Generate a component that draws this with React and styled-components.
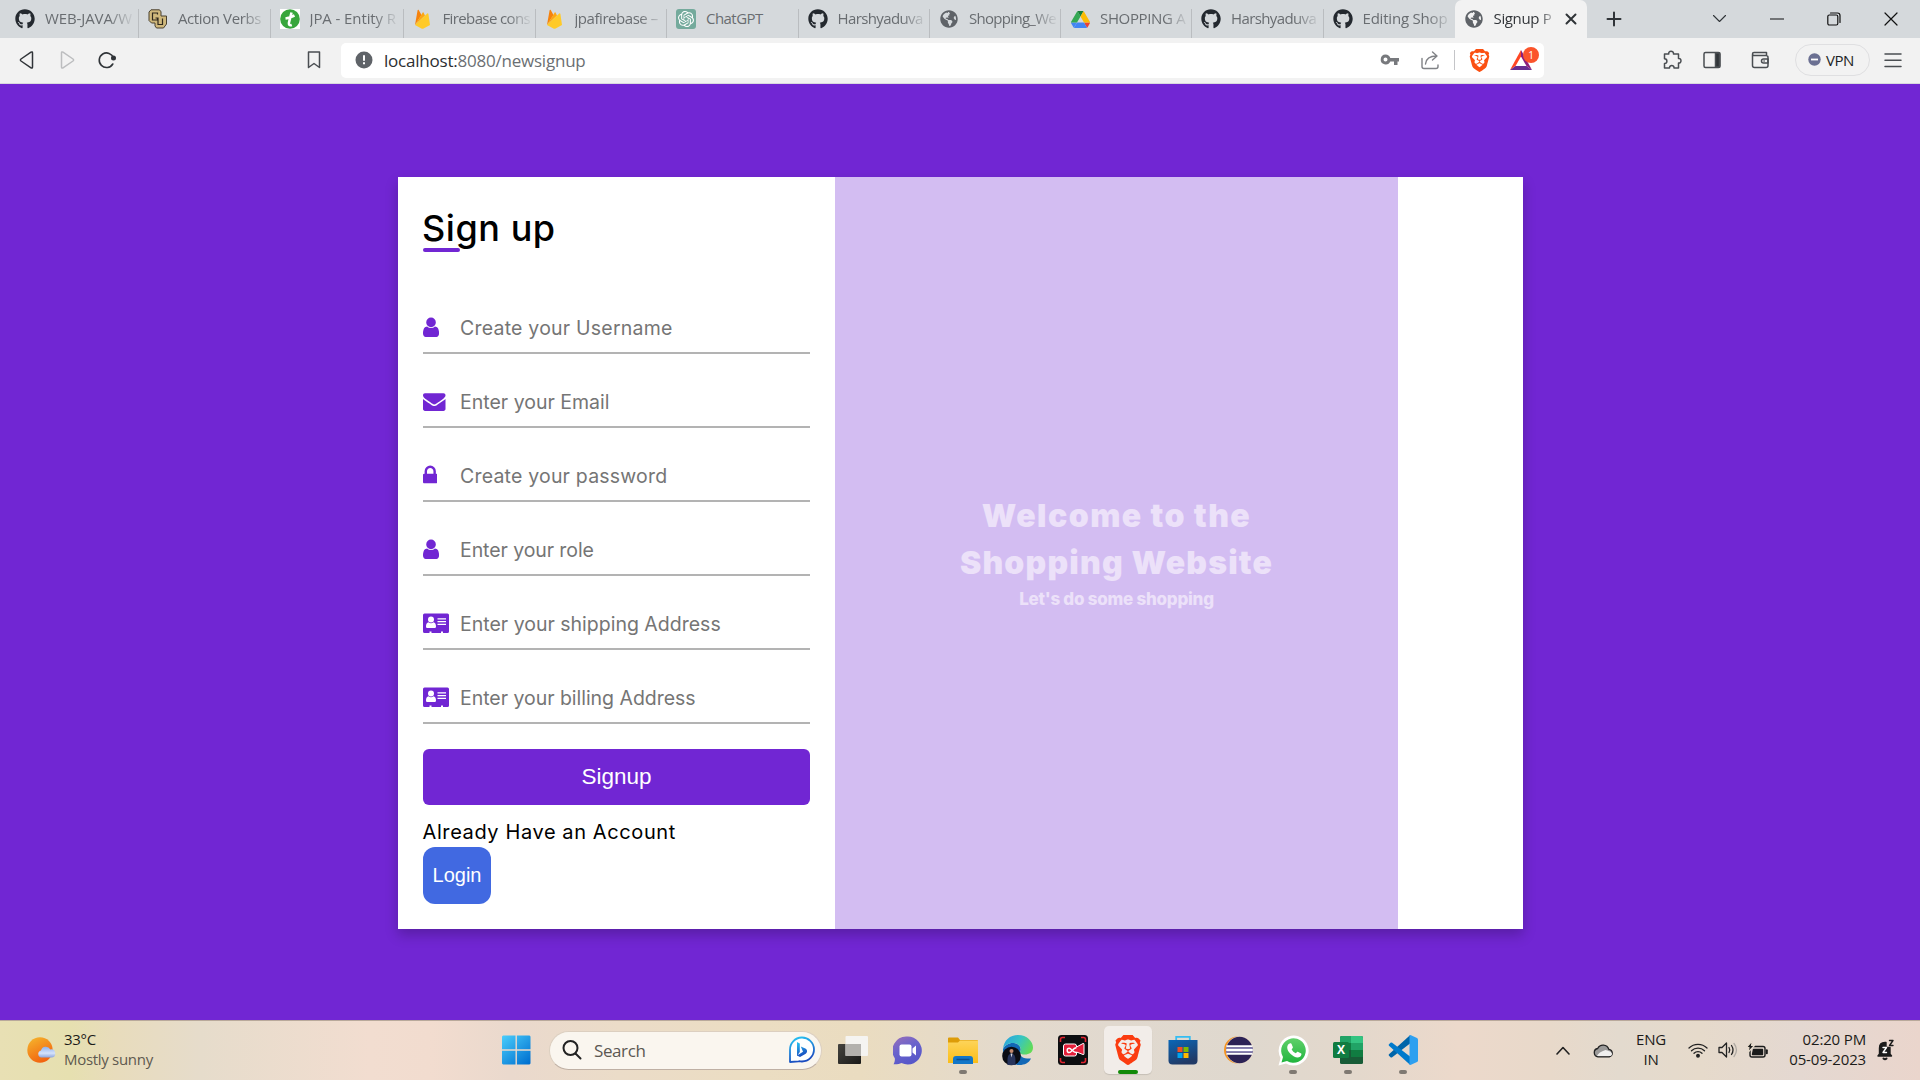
import React from "react";
import styled, { createGlobalStyle, css } from "styled-components";
import { FaGithub, FaGlobeAmericas } from "react-icons/fa";
import { SiBrave, SiOpenai } from "react-icons/si";

const PURPLE = "#7126d3";
const UI = '"Open Sans", "Noto Sans", sans-serif';

const GlobalStyle = createGlobalStyle`
  *, *::before, *::after { box-sizing: border-box; }
  body { margin: 0; background: ${PURPLE}; overflow: hidden; }
  svg { display: block; flex: none; }
`;

const Screen = styled.div`
  width: 1920px;
  height: 1080px;
  display: flex;
  flex-direction: column;
  overflow: hidden;
  font-family: ${UI};
`;

/* ---------- tab strip ---------- */

const TabStrip = styled.div`
  height: 38px;
  flex: none;
  display: flex;
  background: #d5d9dc;
  padding-left: 7px;
`;

const Tab = styled.div`
  position: relative;
  width: ${(p) => p.$w || 131.5}px;
  flex: none;
  height: 38px;
  display: flex;
  align-items: center;
  padding-left: ${(p) => (p.$first ? 8 : 9)}px;
  background: ${(p) => (p.$active ? "#f2f2f2" : "transparent")};
  border-radius: ${(p) => (p.$active ? "7px 7px 0 0" : "0")};
  ${(p) =>
    p.$line &&
    css`
      &::after {
        content: "";
        position: absolute;
        right: 0;
        top: 9px;
        width: 1px;
        height: 29px;
        background: #babdc0;
      }
    `}
`;

const TabIcon = styled.span`
  width: 20px;
  height: 20px;
  flex: none;
  display: flex;
  align-items: center;
  justify-content: center;
`;

const TabLabel = styled.span`
  width: ${(p) => p.$w || 89}px;
  margin: -2px 0 0 10px;
  white-space: nowrap;
  font-size: 15px;
  line-height: 22px;
  letter-spacing: ${(p) => p.$ls}px;
  font-weight: ${(p) => (p.$active ? 500 : 400)};
  color: ${(p) => (p.$active ? "#34373b" : "#696d71")};
  mask-image: ${(p) => (p.$whole ? "none" : "linear-gradient(90deg, #000 72%, rgba(0, 0, 0, 0.1) 98%)")};
`;

const StripGlyph = styled.span`
  width: ${(p) => p.$w}px;
  margin-left: ${(p) => p.$ml || 0}px;
  height: 38px;
  display: flex;
  align-items: center;
  justify-content: center;
`;

/* ---------- toolbar ---------- */

const Toolbar = styled.div`
  height: 46px;
  flex: none;
  display: flex;
  align-items: center;
  background: #f2f2f2;
  border-bottom: 1px solid #d9d8de;
  padding: 0 0 1px 15px;
`;

const ToolIcon = styled.span`
  width: 24px;
  height: 24px;
  flex: none;
  margin-left: ${(p) => p.$ml || 0}px;
  display: flex;
  align-items: center;
  justify-content: center;
`;

const AddressBar = styled.div`
  width: 1203px;
  height: 35px;
  flex: none;
  margin-left: 15px;
  display: flex;
  align-items: center;
  background: #fff;
  border-radius: 5px;
  padding-left: 11px;
`;

const Url = styled.span`
  flex: 1;
  margin-left: 8px;
  font-size: 17px;
  letter-spacing: -0.22px;
  color: #6b6f73;
  b { font-weight: 400; color: #2b2e31; }
`;

const Divider = styled.span`
  width: 1px;
  height: 20px;
  margin: 0 12px;
  background: #c4c5c8;
`;

const Rewards = styled.span`
  position: relative;
  width: 30px;
  height: 24px;
  margin: 0 5px 0 18px;
  flex: none;
`;

const Badge = styled.span`
  position: absolute;
  left: 14px;
  top: -1px;
  width: 16px;
  height: 16px;
  border-radius: 50%;
  background: #fb542b;
  color: #fff;
  font-size: 10px;
  line-height: 16px;
  text-align: center;
`;

const Vpn = styled.span`
  width: 75px;
  height: 32px;
  margin-left: 23px;
  display: flex;
  align-items: center;
  gap: 5px;
  padding: 0 0 1px 12px;
  border: 1px solid #dfdfe1;
  border-radius: 16px;
  font-size: 15px;
  line-height: 22px;
  letter-spacing: -0.45px;
  color: #1d1f25;
`;

/* ---------- page ---------- */

const Page = styled.main`
  flex: 1;
  background: ${PURPLE};
  padding: 93px 0 0 398px;
`;

const Card = styled.section`
  width: 1125px;
  height: 752px;
  display: flex;
  background: #fff;
  box-shadow: 0 6px 12px rgba(0, 0, 0, 0.22);
`;

const Form = styled.form`
  width: 437px;
  padding: 25px;
  display: flex;
  flex-direction: column;
  align-items: flex-start;
  font-family: Inter, sans-serif;
`;

const Title = styled.h1`
  position: relative;
  isolation: isolate;
  margin: 0 0 50px;
  height: 52px;
  font-size: 36px;
  line-height: 53px;
  font-weight: 500;
  letter-spacing: 0.55px;
  text-indent: -1px;
  color: #000;
  &::before {
    content: "";
    position: absolute;
    z-index: -1;
    left: 0;
    top: 46px;
    width: 37px;
    height: 4px;
    border-radius: 3px;
    background: ${PURPLE};
  }
`;

const Field = styled.label`
  width: 387px;
  height: 50px;
  margin-bottom: 24px;
  padding-bottom: 1px;
  display: flex;
  align-items: center;
  border-bottom: 2px solid #b3b3b3;
`;

const FieldIcon = styled.span`
  width: 37px;
  color: ${PURPLE};
  svg { height: 22.5px; fill: currentColor; }
`;

const Input = styled.input`
  flex: 1;
  min-width: 0;
  border: 0;
  padding: 0;
  outline: none;
  background: transparent;
  font-family: inherit;
  font-size: 19.5px;
  &::placeholder {
    color: #757575;
    letter-spacing: ${(p) => p.$ls}px;
  }
`;

const Submit = styled.button`
  width: 387px;
  height: 56px;
  margin: 1px 0 12px;
  border: 0;
  border-radius: 6px;
  background: ${PURPLE};
  color: #fff;
  font: 22.5px "Liberation Sans", Arial, sans-serif;
`;

const Note = styled.p`
  margin: 0;
  font-size: 20px;
  line-height: 30px;
  letter-spacing: 0.6px;
  text-indent: -0.5px;
  color: #000;
`;

const Login = styled.button`
  width: 68px;
  height: 57px;
  padding: 0;
  border: 0;
  border-radius: 12px;
  background: #4169e1;
  color: #fff;
  font: 20px "Liberation Sans", Arial, sans-serif;
`;

const Welcome = styled.div`
  width: 563px;
  display: flex;
  flex-direction: column;
  align-items: center;
  justify-content: center;
  padding-bottom: 1px;
  background: #d3bdf2;
  color: #ece1f9;
  font-family: Inter, sans-serif;
  text-align: center;
`;

const WelcomeLine = styled.div`
  font-size: 32px;
  font-weight: 900;
  line-height: 47px;
  letter-spacing: ${(p) => p.$ls}px;
`;

const WelcomeSub = styled.div`
  font-size: 17px;
  font-weight: 800;
  line-height: 27px;
  letter-spacing: -0.24px;
`;

/* ---------- taskbar ---------- */

const Taskbar = styled.footer`
  height: 60px;
  flex: none;
  display: flex;
  align-items: center;
  border-top: 1px solid #b9a99b;
  padding-bottom: 1px;
  background: linear-gradient(
    90deg,
    #e8e0b4 0, #e6e0b0 70px, #e8dcbc 115px, #e6dccb 200px, #f2ddd0 370px, #f2dccf 430px,
    #ead9cd 510px, #ebdcc8 620px, #ebddc2 760px, #eadcc0 860px, #e4dacc 1000px, #e1d9cf 1110px,
    #dfd8ce 1250px, #e3d8cc 1350px, #ecd9cb 1460px, #e8d9ca 1550px, #e3dace 1620px,
    #e6dacb 1700px, #e4d8d1 1800px, #ead5cc 1920px
  );
`;

const Weather = styled.div`
  width: 492px;
  display: flex;
  align-items: center;
  gap: 8px;
  padding: 0 0 1px 27px;
`;

const TwoLines = styled.div`
  width: ${(p) => p.$w || "auto"};
  margin-top: -2px;
  text-align: ${(p) => p.$align || "left"};
  font-size: 15px;
  line-height: 20px;
  letter-spacing: ${(p) => p.$ls ?? -0.3}px;
  color: #1c1b19;
  white-space: nowrap;
`;

const Muted = styled.div`
  color: #5e594f;
`;

const Apps = styled.div`
  display: flex;
  align-items: center;
  gap: 7px;
`;

const SearchBox = styled.div`
  width: 273px;
  height: 39px;
  margin-left: 2px;
  display: flex;
  align-items: center;
  padding: 0 6px 0 12px;
  border-radius: 20px;
  background: #faf6ef;
  border: 1px solid #dccfc0;
  border-bottom-color: #bfb0a4;
`;

const SearchText = styled.span`
  flex: 1;
  margin-left: 12px;
  font-size: 17px;
  letter-spacing: -0.4px;
  color: #5c5852;
`;

const AppCell = styled.div`
  position: relative;
  width: 48px;
  height: 48px;
  display: flex;
  align-items: center;
  justify-content: center;
  border-radius: 5px;
  background: ${(p) => (p.$active ? "#f2ede9" : "transparent")};
  box-shadow: ${(p) => (p.$active ? "0 1px 1px rgba(0,0,0,.12)" : "none")};
  ${(p) =>
    p.$mark &&
    css`
      &::after {
        content: "";
        position: absolute;
        bottom: 0;
        left: ${p.$active ? 14 : 20}px;
        width: ${p.$active ? 20 : 8}px;
        height: 4px;
        border-radius: 2px;
        background: ${p.$active ? "#128a08" : "#7f7972"};
      }
    `}
`;

const Tray = styled.div`
  margin-left: auto;
  padding-right: 14px;
  display: flex;
  align-items: center;
`;

const TrayCell = styled.div`
  width: ${(p) => p.$w}px;
  margin-left: ${(p) => p.$ml || 0}px;
  display: flex;
  justify-content: center;
`;

/* ---------- drawings ---------- */

const Firebase = () => (
  <svg width="17" height="20" viewBox="0 0 17 20">
    <path d="M1 16 3.6 1.2c.1-.6.8-.7 1.100-.2L7.500 6z" fill="#f6820c" />
    <path d="M1 16 8.600 3.700c.3-.5.8-.5 1 0L11 6.500z" fill="#fda611" />
    <path d="m1 16 12.300-11.500c.4-.4 1-.2 1.100.4L16 16l-6.400 3.500c-.7.4-1.500.4-2.200 0z" fill="#ffca28" />
  </svg>
);

const Cu = () => (
  <svg width="20" height="20" viewBox="0 0 20 20">
    <path d="M3 .8h8.500l1.500 2V7h5.500v8l-3 4H8.500L7 17v-3H3.500L1 11.500V3z" fill="#cfb87c" stroke="#4a412f" strokeWidth="1" />
    <path d="M9.500 5.500V4H4.500v7h5V9H7.500M10 8.500v7h4.500V9.500" fill="none" stroke="#30291d" strokeWidth="1.200" />
  </svg>
);

const GreenT = () => (
  <svg width="20" height="20" viewBox="0 0 20 20">
    <rect width="20" height="20" fill="#fff" />
    <circle cx="10" cy="10" r="9.800" fill="#37a63c" />
    <path d="M11.500 3.500 9 13.500c-.4 2 .4 3.200 2.800 2.400M5.500 9.500c2.500-.3 5.500-1.300 9-3" fill="none" stroke="#fff" strokeWidth="2.600" />
  </svg>
);

const GptIcon = () => (
  <svg width="20" height="20" viewBox="0 0 20 20">
    <rect width="20" height="20" rx="3" fill="#74aa9c" />
    <SiOpenai x="2" y="2" size={16} color="#fff" />
  </svg>
);

const Drive = () => (
  <svg width="19" height="17" viewBox="0 0 87.300 78">
    <path d="m6.600 66.850 3.850 6.650c.8 1.400 1.950 2.500 3.300 3.300l13.750-23.800h-27.500c0 1.550.4 3.100 1.200 4.500z" fill="#4285f4" />
    <path d="m43.650 25-13.750-23.800c-1.350.8-2.500 1.900-3.300 3.300l-25.400 44a9.060 9.060 0 0 0 -1.200 4.500h27.500z" fill="#34a853" />
    <path d="m73.550 76.800c1.350-.8 2.500-1.900 3.300-3.300l1.600-2.750 7.650-13.250c.8-1.400 1.200-2.950 1.200-4.500h-27.500l5.850 11.500z" fill="#ea4335" />
    <path d="m43.650 25 13.750-23.800c-1.350-.8-2.900-1.200-4.500-1.200h-18.500c-1.600 0-3.150.45-4.500 1.200z" fill="#188038" />
    <path d="m59.800 53h-32.300l-13.750 23.800c1.350.8 2.900 1.200 4.500 1.200h50.800c1.600 0 3.150-.45 4.500-1.200z" fill="#4285f4" />
    <path d="m73.400 26.500-12.700-22c-.8-1.400-1.950-2.500-3.300-3.300l-13.750 23.800 16.150 28h27.450c0-1.550-.4-3.100-1.200-4.500z" fill="#fbbc04" />
  </svg>
);

const Stroke = ({ w = 24, h = 24, color = "#4a4e52", sw = 1.5, children }) => (
  <svg width={w} height={h} viewBox={`0 0 ${w} ${h}`} fill="none" stroke={color} strokeWidth={sw} strokeLinecap="round" strokeLinejoin="round">
    {children}
  </svg>
);

const UserIcon = () => (
  <svg viewBox="0 0 1280 1792">
    <path d="M1280 1399q0 109-62.500 187t-150.500 78h-854q-88 0-150.500-78t-62.500-187q0-85 8.500-160.500t31.500-152 58.500-131 94-89 134.500-34.500q131 128 313 128t313-128q76 0 134.500 34.500t94 89 58.500 131 31.500 152 8.500 160.500zm-256-887q0 159-112.500 271.500t-271.500 112.500-271.500-112.500-112.500-271.500 112.500-271.500 271.500-112.500 271.500 112.500 112.500 271.500z" />
  </svg>
);
const MailIcon = () => (
  <svg viewBox="0 0 1792 1792">
    <path d="M1792 710v794q0 66-47 113t-113 47h-1472q-66 0-113-47t-47-113v-794q44 49 101 87 362 246 497 345 57 42 92.500 65.500t94.500 48 110 24.500h2q51 0 110-24.500t94.500-48 92.500-65.500q170-123 498-345 57-39 100-87zm0-294q0 79-49 151t-122 123q-376 261-468 325-10 7-42.500 31t-54 38.500-52 32.500-57.500 27-50 9h-2q-23 0-50-9t-57.500-27-52-32.500-54-38.500-42.500-31q-91-64-262-182.500t-205-142.500q-62-42-117-115.500t-55-136.500q0-78 41.500-130t118.500-52h1472q65 0 112.500 47t47.500 113z" />
  </svg>
);
const LockIcon = () => (
  <svg viewBox="0 0 1152 1792">
    <path d="M320 768h512v-192q0-106-75-181t-181-75-181 75-75 181v192zm832 96v576q0 40-28 68t-68 28h-960q-40 0-68-28t-28-68v-576q0-40 28-68t68-28h32v-192q0-184 132-316t316-132 316 132 132 316v192h32q40 0 68 28t28 68z" />
  </svg>
);
const CardIcon = () => (
  <svg viewBox="0 0 26 22.500">
    <path d="M1.500 1.500h23A1.500 1.500 0 0 1 26 3v16.500a1.500 1.500 0 0 1-1.500 1.500H20v-1.500h-2V21H8.500v-1.500h-2V21h-5A1.500 1.500 0 0 1 0 19.500V3a1.500 1.500 0 0 1 1.500-1.500z" />
    <g fill="#fff">
      <circle cx="8" cy="7.500" r="3" />
      <path d="M3 14.500c0-2.500 1-4 2.500-4.200 1.500 1.200 3.500 1.200 5 0 1.500.2 2.500 1.700 2.500 4.200 0 1-.7 1.600-1.500 1.600h-7C3.700 16.100 3 15.500 3 14.500z" />
      <path d="M14.500 6.200H23v1.300h-8.500zM14.500 9H23v1.300h-8.500zM14.500 11.800H23v1.300h-8.500z" />
    </g>
  </svg>
);

const Sun = () => (
  <svg width="29" height="28" viewBox="0 0 29 28">
    <defs>
      <linearGradient id="sun" x2=".5" y2="1"><stop stopColor="#f5b82e" /><stop offset="1" stopColor="#f2640f" /></linearGradient>
      <linearGradient id="cl" x2="0" y2="1"><stop stopColor="#8fb2ee" /><stop offset=".6" stopColor="#d5e2fa" /><stop offset="1" stopColor="#8ea6dd" /></linearGradient>
    </defs>
    <circle cx="13" cy="14" r="12.700" fill="url(#sun)" />
    <path d="M14 21.500a3.600 3.600 0 0 1 0-7 5 5 0 0 1 9.300-1 3.900 3.900 0 0 1 1.700 8z" fill="url(#cl)" />
  </svg>
);

const Windows = () => (
  <svg width="30" height="30" viewBox="0 0 30 30">
    <defs><linearGradient id="win" gradientUnits="userSpaceOnUse" x1="0" y1="0" x2="26" y2="30"><stop stopColor="#4cd0fd" /><stop offset="1" stopColor="#0070d0" /></linearGradient></defs>
    <path d="M2 .5h12.500v13.800H1V1.500zM15.900.5h12.600l1 1v12.800H15.900zM1 15.700h13.500v13.800H2l-1-1zM15.900 15.700h13.600v12.800l-1 1H15.900z" fill="url(#win)" />
  </svg>
);

const Bing = () => (
  <svg width="27" height="28" viewBox="0 0 27 28">
    <defs><linearGradient id="bing" x2=".3" y2="1"><stop stopColor="#27c8f4" /><stop offset="1" stopColor="#1a4cc0" /></linearGradient></defs>
    <path d="M2 26V14A12 12 0 1 1 14 25.500c-1.500 0-2-.4-3.500-.2z" fill="#fff" stroke="url(#bing)" strokeWidth="1.800" strokeLinejoin="round" />
    <path d="M9 6 11.800 7.500V16L9 20zM12.800 10.500l4.500 2c2.500 1.300 2.300 4.300 0 5.600L12 21 9 19.500l6-3.700z" fill="url(#bing)" />
  </svg>
);

const TaskView = () => (
  <svg width="30" height="28" viewBox="0 0 30 28">
    <defs><linearGradient id="tv" x2="1" y2="1"><stop stopColor="#45433e" /><stop offset="1" stopColor="#191918" /></linearGradient></defs>
    <rect y="8" width="23" height="20" rx="1" fill="url(#tv)" />
    <rect x="7.500" width="22.500" height="20" rx="1" fill="#f5f5f5" opacity=".92" />
    <rect x="7.500" y="8" width="15.500" height="12" fill="#b3b1ad" />
  </svg>
);

const Chat = () => (
  <svg width="30" height="29" viewBox="0 0 30 29">
    <defs><linearGradient id="chat" x2=".5" y2="1"><stop stopColor="#9b70b8" /><stop offset=".5" stopColor="#6b63cc" /><stop offset="1" stopColor="#5757c9" /></linearGradient></defs>
    <path d="M14.500.5a14 14 0 1 1-6 26.500c-2 1-4.500 1.500-8 1.300 1-1.700 1.600-3.500 1.300-6A14 14 0 0 1 14.500.5z" fill="url(#chat)" />
    <rect x="6.500" y="8.500" width="12" height="12" rx="2" fill="#fff" />
    <path d="m19.500 12.500 3.500-3v10l-3.500-3z" fill="#fff" />
  </svg>
);

const Explorer = () => (
  <svg width="30" height="27" viewBox="0 0 30 27">
    <defs><linearGradient id="fold" x2="0" y2="1"><stop stopColor="#fdd45a" /><stop offset="1" stopColor="#fbbd17" /></linearGradient></defs>
    <path d="M0 1.500Q0 .5 1 .5h9L12 3h17q1 0 1 1v6H0z" fill="#dd9c08" />
    <path d="M0 5.500h10L12 3.500h18V26H0z" fill="url(#fold)" />
    <path d="M5 27v-5q0-3 3-3h14q3 0 3 3v5z" fill="#1377c8" />
    <path d="M8.500 22.500h13" stroke="#0c4f90" strokeWidth="1.500" />
  </svg>
);

const Edge = () => (
  <svg width="32" height="32" viewBox="0 0 32 32">
    <defs>
      <linearGradient id="e1" x1="0" y1=".2" x2="1" y2=".6"><stop stopColor="#2ba3de" /><stop offset=".5" stopColor="#36c4c3" /><stop offset="1" stopColor="#62dc56" /></linearGradient>
    </defs>
    <path d="M1 15c2-4 6-6.500 11-6 6 .5 8 6 6 9-1 3 2 7 11 6.500-2 4.500-6.500 6.500-11.500 6.500C8 31 .5 24 1 15z" fill="#1268b6" />
    <path d="M1 15C2 6 8 1 16 1c9 0 15 6.500 15 12.500 0 5-4 7-8 7-3.500 0-5.500-1-5-2.500 2-3 0-8.500-6-9C7 8.500 3 11 1 15z" fill="url(#e1)" />
    <circle cx="9.500" cy="22" r="9.300" fill="#0b0d14" />
    <circle cx="9.500" cy="17" r="2" fill="#c28a70" />
    <path d="M5.500 31c0-6-.5-11 4-11.500 4.500.5 4 5.500 4 11.500z" fill="#27345c" />
    <path d="m8.500 19.500 1 4 1-4z" fill="#d6d8e2" />
  </svg>
);

const Recorder = () => (
  <svg width="30" height="30" viewBox="0 0 30 30">
    <rect width="30" height="30" rx="3.500" fill="#0d0e10" />
    <path d="M2.500 7V4.500q0-2 2-2H7M23 2.500h2.500q2 0 2 2V7M27.500 23v2.500q0 2-2 2H23M7 27.500H4.500q-2 0-2-2V23" fill="none" stroke="#e02430" strokeWidth="1.600" />
    <path d="M7.500 9h9q2 0 2 2v1l6.500-3.500q1-.4 1 .8v9.400q0 1.200-1 .8L18.500 17v2q0 2-2 2h-9q-2 0-2-2v-8q0-2 2-2z" fill="#e51f3a" stroke="#fff" strokeWidth="1" />
    <path d="M18 12.800c-3 .3-4.500 4.700-6.800 4.700-2.700 0-2.700-4.200 0-4.200 2.300 0 3.500 4.200 6.800 4.200" fill="none" stroke="#fff" strokeWidth="1.400" strokeLinecap="round" />
  </svg>
);

const Store = () => (
  <svg width="30" height="30" viewBox="0 0 30 30">
    <defs><linearGradient id="st" x2=".4" y2="1"><stop stopColor="#0a67b8" /><stop offset="1" stopColor="#213a66" /></linearGradient></defs>
    <path d="M8.200 6V1.800h13.600V6" fill="none" stroke="#35bdf2" strokeWidth="1.800" />
    <path d="M.5 5h29v20.500q0 4-4 4h-21q-4 0-4-4z" fill="url(#st)" />
    <path d="M9.500 12h5v5h-5z" fill="#f25022" /><path d="M15.500 12h5v5h-5z" fill="#7fba00" />
    <path d="M9.500 18h5v5h-5z" fill="#00a4ef" /><path d="M15.500 18h5v5h-5z" fill="#ffb900" />
  </svg>
);

const Eclipse = () => (
  <svg width="30" height="28" viewBox="0 0 30 28">
    <path d="M14.500.5a13.500 13.500 0 1 0 0 27z" fill="#f59423" />
    <circle cx="16.800" cy="14" r="13.800" fill="#e9d9c8" />
    <circle cx="16.500" cy="14" r="13.200" fill="#2c2255" />
    <path d="M3.500 10.200h26M3.200 14h26.600M3.500 17.800h26" stroke="#fff" strokeWidth="2" />
    <path d="M3.300 12.100h26.400M3.300 15.900h26.400" stroke="#8a84b4" strokeWidth="1.600" />
  </svg>
);

const WhatsApp = () => (
  <svg width="31" height="31" viewBox="0 0 31 31">
    <defs><linearGradient id="wa" x2="0" y2="1"><stop stopColor="#5fd06a" /><stop offset="1" stopColor="#22b53e" /></linearGradient></defs>
    <path d="M.5 30.500 2.600 23A15 15 0 1 1 8 28.500z" fill="#fff" />
    <path d="M3.500 27.500 5 22A12.300 12.300 0 1 1 9 26z" fill="url(#wa)" />
    <path d="M9.200 12.500c0-2 1.500-4.200 3-4.200.9 0 1.200.2 1.500 1l1.100 2.600c.2.600 0 1.100-1.200 2.300.9 1.900 2.300 3.200 4.300 4.100 1.300-1.500 1.700-1.700 2.300-1.400l2.600 1.300c.7.400.7.700.6 1.400-.3 1.800-2 2.900-3.800 2.900-4.600-.3-10.400-5.600-10.400-10z" fill="#fff" />
  </svg>
);

const ExcelMark = styled.span`
  position: absolute;
  left: 9px;
  top: 16px;
  width: 16px;
  height: 16px;
  border-radius: 1.5px;
  background: #107c41;
  color: #fff;
  font: 700 12px/16px ${UI};
  text-align: center;
`;

const Excel = () => (
  <>
    <svg width="30" height="28" viewBox="0 0 30 28">
      <rect x="7" width="23" height="28" rx="1.500" fill="#185c37" />
      <path d="M7 1.500Q7 0 8.500 0H18v7H7z" fill="#21a366" /><path d="M18 0h10.500Q30 0 30 1.500V7H18z" fill="#33c481" />
      <path d="M7 7h11v7H7z" fill="#107c41" /><path d="M18 7h12v7H18z" fill="#21a366" />
      <path d="M7 14h11v7H7z" fill="#185c37" /><path d="M18 14h12v7H18z" fill="#107c41" />
    </svg>
    <ExcelMark>X</ExcelMark>
  </>
);

const VsCode = () => (
  <svg width="30" height="30" viewBox="0 0 30 30">
    <path d="M22 .3 1 19.200q-.8.8 0 1.600l1.500 1.400q.8.600 1.700 0L22 8.500z" fill="#0065a9" />
    <path d="M22 29.700 1 10.800q-.8-.8 0-1.600l1.500-1.400q.8-.6 1.700 0L22 21.500z" fill="#007acc" />
    <path d="M21.500.2Q22.300-.1 23 .2l6 2.800q1 .5 1 1.600v20.800q0 1.100-1 1.600l-6 2.800q-.8.300-1.500 0z" fill="#2ea0f0" />
  </svg>
);

/* ---------- data ---------- */

const Octo = <FaGithub size={20} color="#24292f" />;
const Globe = <FaGlobeAmericas size={18} color="#5f6368" />;

const tabs = [
  { icon: Octo, label: "WEB-JAVA/W", w: 132, ls: -0.1 },
  { icon: <Cu />, label: "Action Verbs", ls: -0.4 },
  { icon: <GreenT />, label: "JPA - Entity R", w: 133, ls: -0.1 },
  { icon: <Firebase />, label: "Firebase cons", w: 132, ls: -0.62 },
  { icon: <Firebase />, label: "jpafirebase –", ls: -0.45 },
  { icon: <GptIcon />, label: "ChatGPT", ls: -0.55, whole: true },
  { icon: Octo, label: "Harshyaduva", ls: -0.62 },
  { icon: Globe, label: "Shopping_We", w: 131, ls: -0.7 },
  { icon: <Drive />, label: "SHOPPING A", w: 131, ls: -0.35 },
  { icon: Octo, label: "Harshyaduva", ls: -0.62 },
  { icon: Octo, label: "Editing Shop", w: 131, ls: -0.2 },
];

const fields = [
  { icon: <UserIcon />, text: "Create your Username", ls: 0.22 },
  { icon: <MailIcon />, text: "Enter your Email", ls: 0 },
  { icon: <LockIcon />, text: "Create your password", ls: 0.2 },
  { icon: <UserIcon />, text: "Enter your role", ls: -0.08 },
  { icon: <CardIcon />, text: "Enter your shipping Address", ls: 0 },
  { icon: <CardIcon />, text: "Enter your billing Address", ls: -0.03 },
];

export default function App() {
  return (
    <Screen>
      <GlobalStyle />
      <TabStrip>
        {tabs.map((t, i) => (
          <Tab key={i} $w={t.w} $first={i === 0} $line={i < 10}>
            <TabIcon>{t.icon}</TabIcon>
            <TabLabel $ls={t.ls} $whole={t.whole}>{t.label}</TabLabel>
          </Tab>
        ))}
        <Tab $active $w={132}>
          <TabIcon>{Globe}</TabIcon>
          <TabLabel $active $w={63} $ls={-0.35}>Signup P</TabLabel>
          <StripGlyph $w={20} $ml={4}>
            <Stroke w={12} h={12} color="#303438" sw={2}><path d="M1.500 1.500l9 9M10.500 1.500l-9 9" /></Stroke>
          </StripGlyph>
        </Tab>
        <StripGlyph $w={20} $ml={17}>
          <Stroke w={16} h={16} color="#303438" sw={2}><path d="M8 1.500v13M1.500 8h13" /></Stroke>
        </StripGlyph>
        <StripGlyph $w={20} $ml={86}>
          <Stroke w={15} h={10} color="#303438" sw={1.1}><path d="M1.500 1.500l6 6 6-6" /></Stroke>
        </StripGlyph>
        <StripGlyph $w={20} $ml={37}>
          <Stroke w={14} h={2} color="#111" sw={1.2}><path d="M0 1h14" /></Stroke>
        </StripGlyph>
        <StripGlyph $w={20} $ml={37}>
          <Stroke w={14} h={14} color="#111" sw={1.2}><rect x=".8" y="3" width="10" height="10" rx="1.500" /><path d="M3.500 1h7q2.500 0 2.500 2.500v7" /></Stroke>
        </StripGlyph>
        <StripGlyph $w={20} $ml={37}>
          <Stroke w={14} h={14} color="#111" sw={1.2}><path d="M1 1l12 12M13 1L1 13" /></Stroke>
        </StripGlyph>
      </TabStrip>

      <Toolbar>
        <ToolIcon><Stroke color="#303438"><path d="M17.500 5v14q0 1.600-1.500.8L6 13q-1.200-1 0-2l10-6.800q1.500-.8 1.500.8z" /></Stroke></ToolIcon>
        <ToolIcon $ml={16}><Stroke color="#bcbdbf"><path d="M6.500 5v14q0 1.600 1.500.8L18 13q1.200-1 0-2L8 4.200Q6.500 3.400 6.500 5z" /></Stroke></ToolIcon>
        <ToolIcon $ml={16}>
          <Stroke color="#303438" sw={1.600}><path d="M18.500 10A7.300 7.300 0 1 0 17.800 16" /><circle cx="18.500" cy="10" r="1.700" fill="#303438" /></Stroke>
        </ToolIcon>
        <ToolIcon $ml={183}><Stroke><path d="M6.500 4h11v15.500L12 15.500l-5.500 4z" /></Stroke></ToolIcon>
        <AddressBar>
          <ToolIcon>
            <svg width="18" height="18" viewBox="0 0 18 18"><circle cx="9" cy="9" r="8.500" fill="#5f6368" /><path d="M8 4.200h2v5.600H8zM8 11.300h2v2H8z" fill="#fff" /></svg>
          </ToolIcon>
          <Url><b>localhost:</b>8080/newsignup</Url>
          <ToolIcon>
            <svg width="20" height="14" viewBox="0 0 20 14"><path fillRule="evenodd" d="M5.500 1.500a5 5 0 0 1 4.800 3.500H19v3.500h-1.500V12H14V8.500h-3.700A5 5 0 1 1 5.500 1.500zm0 3a2 2 0 1 0 0 4 2 2 0 0 0 0-4z" fill="#77797d" /></svg>
          </ToolIcon>
          <ToolIcon $ml={16}>
            <Stroke color="#808286" sw={1.400}><path d="M4 10.500v8q0 2 2 2h12q2 0 2-2v-1.500M7.500 16c.5-5 4-8 11-8M14.500 4l4.500 4-4.500 4" /></Stroke>
          </ToolIcon>
          <Divider />
          <ToolIcon><SiBrave size={23} color="#fb5012" /></ToolIcon>
          <Rewards>
            <svg width="24" height="24" viewBox="0 0 24 24">
              <path d="M12 2v6.500L6.500 18 1 22z" fill="#ff4724" />
              <path d="M1 22l5.500-4h11l5.500 4z" fill="#662d91" />
              <path d="M12 2l11 20-5.500-4L12 8.500z" fill="#8b1f7c" />
            </svg>
            <Badge>1</Badge>
          </Rewards>
        </AddressBar>
        <ToolIcon $ml={116}>
          <Stroke><path d="M4 7h4.300c-1-3.500 5.200-3.800 4.700 0h5v4.500c3.300-.6 3.300 5 0 4.500V21h-4.500c.3-3.300-4.600-3.300-4.500 0H4v-4.500c3.200 0 3.200-4.600 0-4.700z" transform="translate(.5 -1)" /></Stroke>
        </ToolIcon>
        <ToolIcon $ml={16}><Stroke><rect x="4" y="4.500" width="16" height="15" rx="1.500" /><path d="M15.500 5h4v14h-4z" fill="#303438" /></Stroke></ToolIcon>
        <ToolIcon $ml={24}><Stroke><path d="M4.500 6.500v11q0 2 2 2H18q2 0 2-2v-8q0-2-2-2H6Q4.500 7.500 4.500 6T6 4.500h12.500v3" /><path d="M20 11h-4.500q-2 0-2 2t2 2H20z" /><path d="M16 13h.2" /></Stroke></ToolIcon>
        <Vpn>
          <svg width="13" height="13" viewBox="0 0 13 13"><circle cx="6.500" cy="6.500" r="6.200" fill="#6b7092" /><path d="M3 6.500h7" stroke="#fff" strokeWidth="1.800" /></svg>
          VPN
        </Vpn>
        <ToolIcon $ml={11}><Stroke><path d="M4 6h16M4 12.200h16M4 18.400h16" /></Stroke></ToolIcon>
      </Toolbar>

      <Page>
        <Card>
          <Form>
            <Title>Sign up</Title>
            {fields.map((f) => (
              <Field key={f.text}>
                <FieldIcon>{f.icon}</FieldIcon>
                <Input placeholder={f.text} $ls={f.ls} />
              </Field>
            ))}
            <Submit type="button">Signup</Submit>
            <Note>Already Have an Account</Note>
            <Login type="button">Login</Login>
          </Form>
          <Welcome>
            <WelcomeLine $ls={1.45}>Welcome to the</WelcomeLine>
            <WelcomeLine $ls={1.2}>Shopping Website</WelcomeLine>
            <WelcomeSub>Let's do some shopping</WelcomeSub>
          </Welcome>
        </Card>
      </Page>

      <Taskbar>
        <Weather>
          <Sun />
          <TwoLines>33°C<Muted>Mostly sunny</Muted></TwoLines>
        </Weather>
        <Apps>
          <AppCell><Windows /></AppCell>
          <SearchBox>
            <Stroke w={20} h={20} color="#222" sw={2}><circle cx="8.500" cy="8" r="7" /><path d="M13.500 13.500l5 5" /></Stroke>
            <SearchText>Search</SearchText>
            <Bing />
          </SearchBox>
          <AppCell><TaskView /></AppCell>
          <AppCell><Chat /></AppCell>
          <AppCell $mark><Explorer /></AppCell>
          <AppCell><Edge /></AppCell>
          <AppCell><Recorder /></AppCell>
          <AppCell $mark $active><SiBrave size={30} color="#fb3c10" /></AppCell>
          <AppCell><Store /></AppCell>
          <AppCell><Eclipse /></AppCell>
          <AppCell $mark><WhatsApp /></AppCell>
          <AppCell $mark><Excel /></AppCell>
          <AppCell $mark><VsCode /></AppCell>
        </Apps>
        <Tray>
          <TrayCell $w={40}><Stroke w={14} h={9} color="#222" sw={1.600}><path d="M1 8l6-6.500L13 8" /></Stroke></TrayCell>
          <TrayCell $w={40}>
            <Stroke w={21} h={15} color="#222" sw={1.300}>
              <path d="M5 13.800a4.200 4.200 0 0 1-.3-8.300 6 6 0 0 1 11.100.8 3.800 3.800 0 0 1 .4 7.500z" fill="#9b9a99" />
              <path d="M4 13.100c1-3 4-4.500 8.500-6.200 2 .5 6.500 1.700 6.500 4 0 1.500-1.300 2.200-3 2.200z" fill="#f0efee" stroke="none" />
            </Stroke>
          </TrayCell>
          <TrayCell $w={56}><TwoLines $align="center" $ls={-0.2}><div>ENG</div><div>IN</div></TwoLines></TrayCell>
          <TrayCell $w={30} $ml={4}>
            <Stroke w={20} h={16} color="#222" sw={1.300}><path d="M1 6a13 13 0 0 1 18 0M3.500 8.700a9.300 9.300 0 0 1 13 0M6 11.300a5.700 5.700 0 0 1 8 0" /><circle cx="10" cy="13.700" r="1.300" fill="#222" /></Stroke>
          </TrayCell>
          <TrayCell $w={30}>
            <Stroke w={20} h={18} color="#222" sw={1.300}><path d="M1 6.500h3L8.500 2v14L4 11.500H1zM11 6.500q1.500 2.500 0 5M13.500 4.500q3 4.500 0 9" /><path d="M16 2.500q5 6.500 0 13" stroke="#b0aaa3" /></Stroke>
          </TrayCell>
          <TrayCell $w={30}>
            <Stroke w={22} h={18} color="#1b1b1b" sw={1.400}>
              <rect x="3" y="5.500" width="15" height="10.500" rx="2" />
              <path d="M6.500 8.500h9v5h-10z" fill="#1b1b1b" />
              <path d="M19.800 9.200v3" strokeWidth="2" />
              <path d="M5.500-.5-.5 6.500H2L.8 11.500 7.500 4.500H4.500z" fill="#1b1b1b" stroke="#e6dacb" strokeWidth="1.200" />
            </Stroke>
          </TrayCell>
          <TwoLines $w="93px" $align="right" $ls={-0.15}><div>02:20 PM</div><div>05-09-2023</div></TwoLines>
          <TrayCell $w={40}>
            <Stroke w={18} h={22} color="#1b1b1b" sw={1.400}>
              <path d="M2.500 15V9q0-5.500 5.500-5.500h1v5h4V15l1.500 2H1z" fill="#1b1b1b" />
              <path d="M6.500 19.500q1.500 1.500 3 0" strokeWidth="2" />
              <path d="M12.500 1.500H16l-3.500 5H16" />
              <path d="M6 8.500h3.500L6 13.500h3.500" stroke="#fff" />
            </Stroke>
          </TrayCell>
        </Tray>
      </Taskbar>
    </Screen>
  );
}
